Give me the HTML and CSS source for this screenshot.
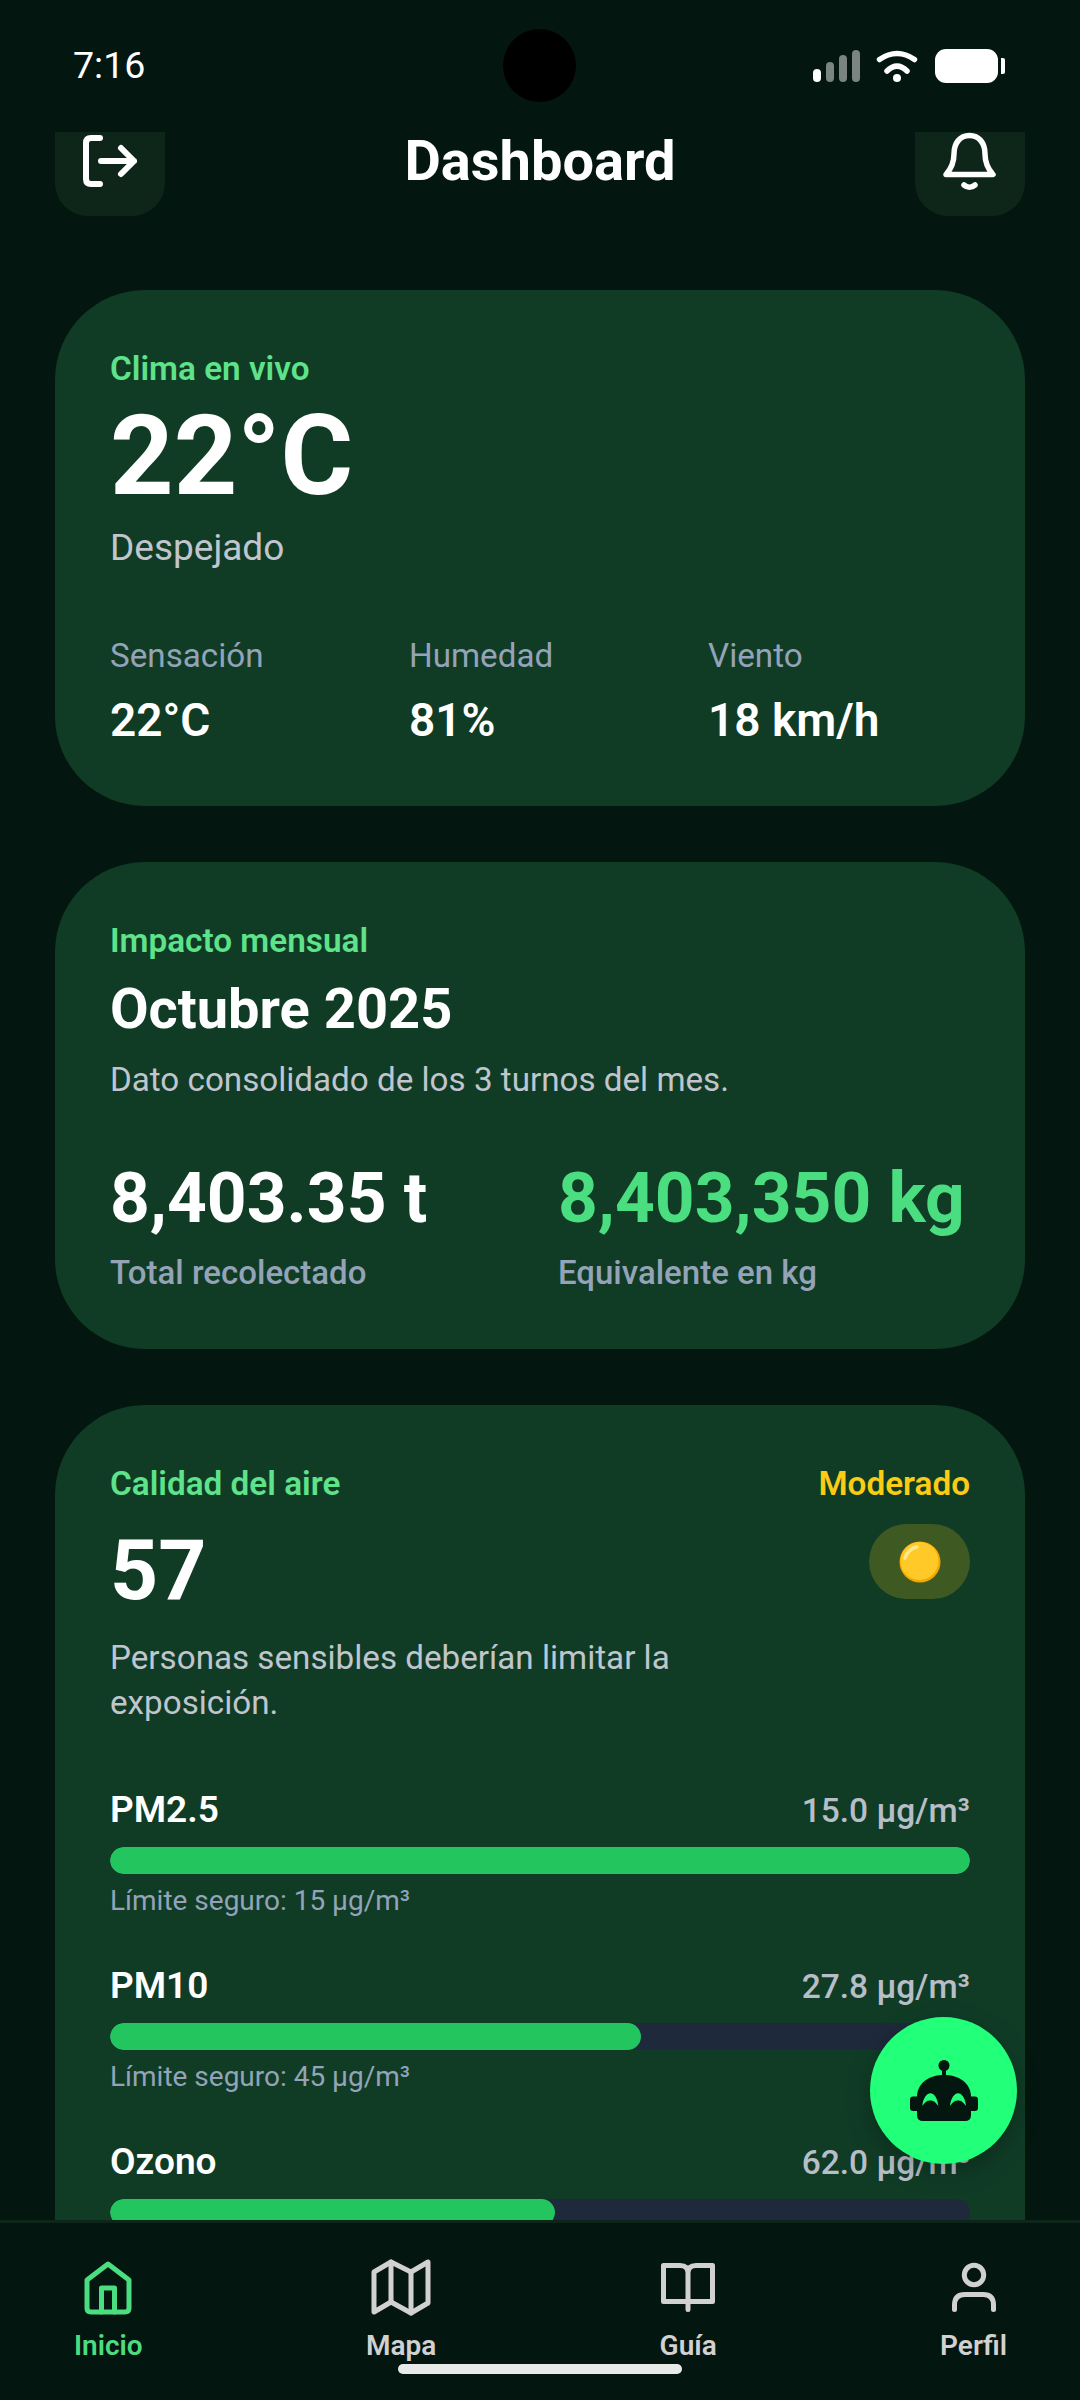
FILE: index.html
```html
<!DOCTYPE html>
<html lang="es">

<head>
    <meta charset="UTF-8">
    <title>Dashboard</title>
    <link rel="stylesheet" href="styles.css">
</head>

<body>
	<div class="app">
		<div class="statusbar">
			<span class="time">7:16</span>
			<div class="status-icons">
				<div class="signal">
					<i class="on"></i><i></i><i></i><i></i>
				</div>
				<svg class="wifi" width="43" height="33" viewBox="0 0 43 33" fill="none" stroke="#fff" stroke-linecap="round">
					<path d="M3.5 9.5Q21 -2.5 38.5 9.5" stroke-width="5.5"/>
					<path d="M11 21Q21 11 31 21" stroke-width="5.5"/>
					<circle cx="21" cy="28" r="4" fill="#fff" stroke="none"/>
				</svg>
				<div class="battery"></div>
				<div class="battery-tip"></div>
			</div>
		</div>
		<div class="camera"></div>

		<header class="topbar">
			<div class="icon-btn">
				<svg width="66" height="66" viewBox="0 0 66 66" fill="none" stroke="#fff" stroke-width="6" stroke-linecap="round" stroke-linejoin="round">
					<path d="M23 10H14Q9 10 9 15V51Q9 56 14 56H23"/>
					<path d="M24 33H57M44 20L57 33L44 46"/>
				</svg>
			</div>
			<h1 class="title">Dashboard</h1>
			<div class="icon-btn">
				<svg width="66" height="66" viewBox="0 0 66 66" fill="none" stroke="#fff" stroke-width="5.5" stroke-linecap="round" stroke-linejoin="round">
					<path d="M9 46.5C14 41 17 35 17 26C17 15 23 7.5 32.5 7.5C42 7.5 48 15 48 26C48 35 51 41 56 46.5Z"/>
					<path d="M27 57Q32.5 61.5 38 57"/>
				</svg>
			</div>
		</header>

		<main class="content">
			<section class="card weather">
				<div class="label">Clima en vivo</div>
				<div class="temp">22°C</div>
				<div class="sky">Despejado</div>
				<div class="stats">
					<div class="stat">
						<div class="stat-name">Sensación</div>
						<div class="stat-value">22°C</div>
					</div>
					<div class="stat">
						<div class="stat-name">Humedad</div>
						<div class="stat-value">81%</div>
					</div>
					<div class="stat">
						<div class="stat-name">Viento</div>
						<div class="stat-value">18 km/h</div>
					</div>
				</div>
			</section>

			<section class="card impact">
				<div class="label">Impacto mensual</div>
				<div class="month">Octubre 2025</div>
				<div class="note">Dato consolidado de los 3 turnos del mes.</div>
				<div class="totals">
					<div class="total">
						<div class="total-value">8,403.35 t</div>
						<div class="total-name">Total recolectado</div>
					</div>
					<div class="total">
						<div class="total-value green">8,403,350 kg</div>
						<div class="total-name">Equivalente en kg</div>
					</div>
				</div>
			</section>

			<section class="card air">
				<div class="air-head">
					<div class="label">Calidad del aire</div>
					<div class="level">Moderado</div>
				</div>
				<div class="air-main">
					<div class="aqi">57</div>
					<div class="pill">
						<svg width="42" height="42" viewBox="0 0 42 42">
							<circle cx="21" cy="21" r="20.5" fill="#f5a800"/>
							<circle cx="20.5" cy="20" r="19" fill="#ffca28"/>
							<path d="M6 17Q9 8 18 6" fill="none" stroke="#ffe88a" stroke-width="3.5" stroke-linecap="round"/>
						</svg>
					</div>
				</div>
				<p class="advice">Personas sensibles deberían limitar la exposición.</p>

				<div class="metric">
					<div class="metric-head">
						<span class="metric-name">PM2.5</span>
						<span class="metric-value">15.0 µg/m³</span>
					</div>
					<div class="track"><div class="fill" style="width: 100%"></div></div>
					<div class="limit">Límite seguro: 15 µg/m³</div>
				</div>
				<div class="metric">
					<div class="metric-head">
						<span class="metric-name">PM10</span>
						<span class="metric-value">27.8 µg/m³</span>
					</div>
					<div class="track"><div class="fill" style="width: 61.8%"></div></div>
					<div class="limit">Límite seguro: 45 µg/m³</div>
				</div>
				<div class="metric">
					<div class="metric-head">
						<span class="metric-name">Ozono</span>
						<span class="metric-value">62.0 µg/m³</span>
					</div>
					<div class="track"><div class="fill" style="width: 51.7%"></div></div>
				</div>
			</section>
		</main>

		<nav class="tabbar">
			<div class="tab active">
				<svg width="66" height="66" viewBox="0 0 66 66" fill="none" stroke="#4ade80" stroke-width="5" stroke-linecap="round" stroke-linejoin="round">
					<path d="M33 9L54 25V53Q54 57 50 57H16Q12 57 12 53V25Z"/>
					<path d="M26.5 57V33H39.5V57"/>
				</svg>
				<span>Inicio</span>
			</div>
			<div class="tab">
				<svg width="66" height="66" viewBox="0 0 66 66" fill="none" stroke="#d1d1d1" stroke-width="5" stroke-linecap="round" stroke-linejoin="round">
					<path d="M6 17L23 7L43 17L60 7V48L43 58L23 47L6 57Z"/>
					<path d="M23 7V47M43 17V58"/>
				</svg>
				<span>Mapa</span>
			</div>
			<div class="tab">
				<svg width="66" height="66" viewBox="0 0 66 66" fill="none" stroke="#d1d1d1" stroke-width="5" stroke-linecap="round" stroke-linejoin="round">
					<path d="M33 18Q33 10.5 25 10.5H8.5V46.5H57.5V10.5H41Q33 10.5 33 18V54.5"/>
				</svg>
				<span>Guía</span>
			</div>
			<div class="tab">
				<svg width="66" height="66" viewBox="0 0 66 66" fill="none" stroke="#d1d1d1" stroke-width="5" stroke-linecap="round" stroke-linejoin="round">
					<circle cx="33" cy="20" r="9.7"/>
					<path d="M13.5 54.5V50Q13.5 39.5 24 39.5H42Q52.5 39.5 52.5 50V54.5"/>
				</svg>
				<span>Perfil</span>
			</div>
		</nav>

		<div class="fab">
			<svg width="68" height="61" viewBox="0 0 68 61" fill="#041610">
				<circle cx="34" cy="5.500" r="5.500"/>
				<rect x="32" y="8" width="4" height="9"/>
				<rect x="0" y="36.500" width="10" height="14.500" rx="3"/>
				<rect x="58" y="36.500" width="10" height="14.500" rx="3"/>
				<path d="M7 37C7 23 19 15 34 15C49 15 61 23 61 37V55Q61 61 55 61H13Q7 61 7 55Z"/>
				<path class="eye" d="M12.300 46C13 38 17 33.300 20.300 33.300C24 33.300 27.600 38 28.300 46C25 41.500 23 40.500 20.300 40.500C17.600 40.500 15.500 41.500 12.300 46Z"/>
				<path class="eye" d="M40 46C40.700 38 44.700 33.300 48 33.300C51.700 33.300 55.300 38 56 46C52.700 41.500 50.700 40.500 48 40.500C45.300 40.500 43.200 41.500 40 46Z"/>
			</svg>
		</div>
		<div class="home-bar"></div>
	</div>
</body>

</html>
```

FILE: styles.css
```css
html,body,h1,div,p{margin:0;padding:0;}
body{background: #041610;font-family: Roboto, "Noto Sans", sans-serif;color: #fff;}
.app{position: relative;display: flex;flex-direction: column;width: 1080px;height: 2400px;overflow: hidden;background: #041610;}

/* status bar */
.statusbar{display: flex;flex: none;justify-content: space-between;align-items: center;height: 132px;padding: 0 75px 0 73px;box-sizing: border-box;}
.time{margin-top: -2px;font-size: 37.5px;line-height: 40px;color: #fff;}
.status-icons{display: flex;align-items: center;}
.signal{display: flex;align-items: flex-end;gap: 5px;height: 32px;margin-right: 16px;}
.signal i{display: block;width: 8px;border-radius: 4px;background: #7a8582;}
.signal i:nth-child(1){height: 13px;background: #fff;}
.signal i:nth-child(2){height: 20px;}
.signal i:nth-child(3){height: 27px;}
.signal i:nth-child(4){height: 32px;}
.wifi{margin-right: 16px;}
.battery{width: 63px;height: 34px;border-radius: 11px;background: #fff;}
.battery-tip{width: 4px;height: 16px;margin-left: 3px;border-radius: 0 2px 2px 0;background: #fff;}
.camera{position: absolute;left: 503px;top: 29px;width: 73px;height: 73px;border-radius: 50%;background: #000;}

/* header, its buttons start cut off under the status bar */
.topbar{display: flex;flex: none;justify-content: space-between;align-items: flex-start;height: 84px;padding: 0 55px;}
.icon-btn{display: flex;flex: none;justify-content: center;align-items: flex-start;width: 110px;height: 84px;border-radius: 0 0 33px 33px;background: #0e2619;}
.icon-btn svg{margin-top: -4px;}
.title{flex: none;font-size: 56px;line-height: 58px;font-weight: 700;}

/* cards */
.content{flex: 1;min-height: 0;padding: 74px 55px 0;overflow: hidden;}
.card{margin-bottom: 56px;padding: 55px;border-radius: 90px;background: #103c26;}
.label{font-size: 33.3px;line-height: 47px;font-weight: 600;color: #5ee28a;}
.green{color: #4ade80;}

.temp{font-size: 111px;line-height: 128px;font-weight: 700;}
.sky{font-size: 37px;line-height: 55px;color: #c0c5ce;}
.stats{display: flex;gap: 37px;margin-top: 59px;}
.stat{flex: 1;}
.stat-name{font-size: 33.2px;line-height: 44px;color: #94a3b8;}
.stat-value{margin-top: 11px;font-size: 46px;line-height: 62px;font-weight: 600;}

.month{margin-top: 12px;font-size: 56px;line-height: 66px;font-weight: 700;}
.note{margin-top: 16px;font-size: 33.2px;line-height: 44px;color: #c0c5ce;}
.totals{display: flex;margin-top: 57px;}
.total:first-child{width: 448px;}
.total-value{font-size: 69.5px;line-height: 80px;font-weight: 700;white-space: nowrap;}
.total-name{margin-top: 12px;font-size: 33px;line-height: 43px;font-weight: 500;color: #94a3b8;}

.air-head{display: flex;justify-content: space-between;}
.level{font-size: 33.3px;line-height: 47px;font-weight: 600;color: #facc15;}
.air-main{display: flex;justify-content: space-between;align-items: flex-start;margin-top: 14px;}
.aqi{font-size: 84px;line-height: 100px;font-weight: 700;}
.pill{display: flex;justify-content: center;align-items: center;width: 101px;height: 75px;margin-top: 3px;border-radius: 38px;background: rgba(250,204,21,0.2);}
.advice{width: 620px;margin-top: 14px;margin-bottom: 60px;font-size: 33.2px;line-height: 45px;color: #c0c5ce;}

.metric{margin-bottom: 40px;}
.metric-head{display: flex;justify-content: space-between;align-items: baseline;}
.metric-name{font-size: 37px;line-height: 50px;font-weight: 600;}
.metric-value{font-size: 33.5px;line-height: 47px;font-weight: 500;color: #b7bec8;}
.track{height: 27px;margin-top: 12px;border-radius: 14px;background: #1e293b;overflow: hidden;}
.fill{height: 100%;border-radius: 14px;background: #22c55e;}
.limit{margin-top: 7px;font-size: 28px;line-height: 40px;color: #94a3b8;}

/* floating button */
.fab{position: absolute;left: 870px;top: 2017px;display: flex;justify-content: center;align-items: flex-start;width: 147px;height: 147px;padding-top: 43px;box-sizing: border-box;border-radius: 50%;background: #22ff78;box-shadow: 0 8px 24px rgba(0,0,0,0.25);}
.fab .eye{fill: #22ff78;}

/* bottom tabs */
.tabbar{position: relative;display: flex;flex: none;justify-content: space-between;height: 180px;padding: 32px 73px 0 74px;box-sizing: border-box;border-top: 3px solid #0e2619;background: #041610;}
.tab{display: flex;flex-direction: column;align-items: center;font-size: 28px;line-height: 36px;font-weight: 600;color: #d1d1d1;}
.tab svg{margin: 0 -6px;}
.tab span{margin-top: 7px;}
.tab.active{color: #4ade80;}
.home-bar{position: absolute;left: 398px;top: 2364px;width: 284px;height: 10px;border-radius: 5px;background: #e8eaea;}
```
